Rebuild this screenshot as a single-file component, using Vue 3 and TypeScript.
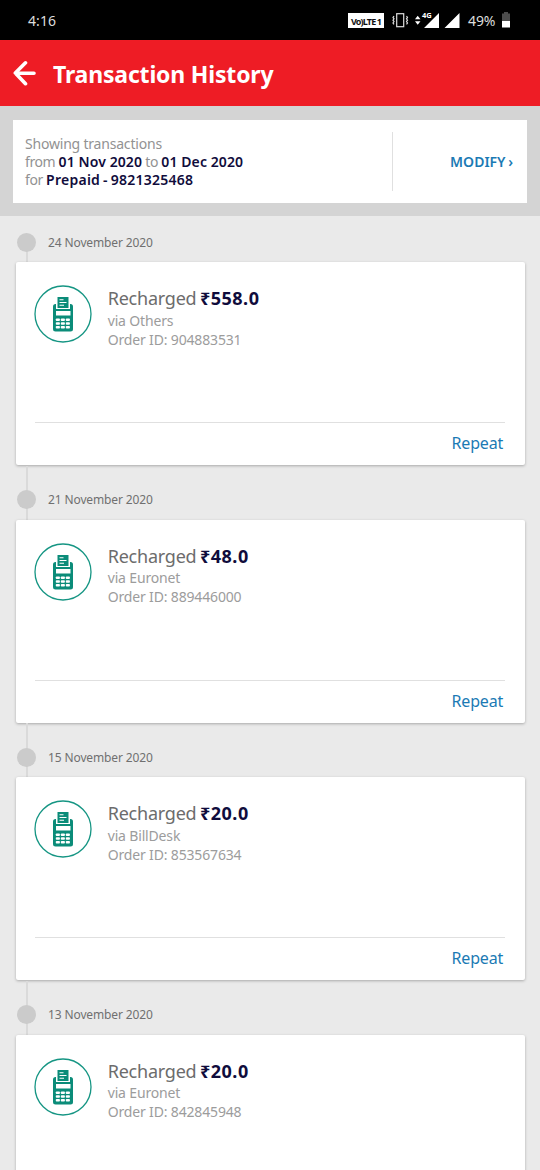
<script setup lang="ts">
interface Transaction {
  date: string
  amount: string
  via: string
  orderId: string
}

const transactions: Transaction[] = [
  { date: '24 November 2020', amount: '558.0', via: 'Others', orderId: '904883531' },
  { date: '21 November 2020', amount: '48.0', via: 'Euronet', orderId: '889446000' },
  { date: '15 November 2020', amount: '20.0', via: 'BillDesk', orderId: '853567634' },
  { date: '13 November 2020', amount: '20.0', via: 'Euronet', orderId: '842845948' },
]
</script>

<template>
  <div class="screen">
    <div class="status">
      <span class="clock">4:16</span>
      <svg class="signals" width="116" height="20" viewBox="0 0 116 20">
        <rect x="0" y="3" width="36" height="15" fill="#fff" />
        <text x="3" y="14.5" class="volte" textLength="31">Vo)LTE 1</text>
        <rect x="48.7" y="3.7" width="7" height="13" fill="none" stroke="#ddd" stroke-width="1.2" />
        <path d="M46 6l-1 1.4 1 1.4-1 1.4 1 1.4-1 1.4 1 1.4M58.5 6l1 1.4-1 1.4 1 1.4-1 1.4 1 1.4-1 1.4" fill="none" stroke="#ddd" stroke-width="1.2" />
        <path d="M67 9.3l2.7-3.5 2.8 3.5zM67 11.2l2.7 3.5 2.8-3.5z" fill="#fff" />
        <path d="M91 3v15H76zM111.5 3v15h-15z" fill="#fff" />
        <path d="M73 0h11.5v7l-2 2.5h-9.5z" fill="#000" />
        <text x="74" y="8" class="net">4G</text>
      </svg>
      <span class="percent">49%</span>
      <svg class="battery" width="10" height="16" viewBox="0 0 10 16">
        <path d="M3 0h4v1.5h2V9H1V1.5h2z" fill="#4d4d4d" />
        <path d="M1 9h8v6.5H1z" fill="#fff" />
      </svg>
    </div>

    <header class="appbar">
      <svg class="back" width="24" height="26" viewBox="0 0 24 26">
        <path d="M13.5 2.8L3.3 13l10.2 10.7M3.5 13.3h18.5" fill="none" stroke="#fff" stroke-width="3.6" stroke-linecap="round" stroke-linejoin="round" />
      </svg>
      <h1>Transaction History</h1>
    </header>

    <section class="filter">
      <div class="filter-card">
        <p class="summary">
          <span class="intro">Showing transactions</span><br />
          <span>from <b>01 Nov 2020</b> to <b>01 Dec 2020</b></span><br />
          <span>for <b class="account">Prepaid - 9821325468</b></span>
        </p>
        <div class="modify"><span>MODIFY ›</span></div>
      </div>
    </section>

    <main class="timeline">
      <article v-for="t in transactions" :key="t.date" class="entry">
        <div class="marker"><i class="dot"></i><time>{{ t.date }}</time></div>
        <div class="card">
          <div class="body">
            <svg class="terminal" width="58" height="58" viewBox="0 0 58 58">
              <circle cx="29" cy="29" r="28" fill="none" stroke="#159583" stroke-width="1.3" />
              <path d="M21.5 19h15a2.500 2.500 0 0 1 2.500 2.500v22.500a2.500 2.500 0 0 1-2.500 2.500h-15a2.500 2.500 0 0 1-2.500-2.500v-22.500a2.500 2.500 0 0 1 2.500-2.500z" fill="#0b8c79" />
              <path d="M22 17h14v7H22z" fill="#fff" />
              <path d="M23.5 12h11v11h-11z" fill="#0b8c79" />
              <path d="M25.5 14.800h4M25.500 17.500h7M25.500 20.200h4.500" stroke="#fff" stroke-width="1.1" />
              <path d="M22 26h14.500v4.500H22z" fill="#fff" />
              <g fill="#fff">
                <template v-for="r in 3" :key="r">
                  <rect v-for="c in 3" :key="c" :x="16.8 + c * 5" :y="29.6 + r * 3.8" width="4.1" height="2.6" rx=".8" />
                </template>
              </g>
            </svg>
            <div class="details">
              <div class="title"><span>Recharged </span><b>₹{{ t.amount }}</b></div>
              <div class="meta">via {{ t.via }}</div>
              <div class="meta">Order ID: {{ t.orderId }}</div>
            </div>
          </div>
          <div class="actions"><span>Repeat</span></div>
        </div>
      </article>
    </main>
  </div>
</template>

<style>
html, body { margin: 0; background: #eaeaea; }
</style>

<style scoped>
.screen {
  width: 540px;
  height: 1170px;
  overflow: hidden;
  background: #eaeaea;
  font-family: "Noto Sans", "Open Sans", sans-serif;
}
.status {
  box-sizing: border-box;
  height: 40px;
  padding: 0 29px 0 28px;
  display: flex;
  align-items: center;
  background: #000;
  color: #ddd;
  font-size: 14px;
}
.clock { flex: 1; letter-spacing: .1px; }
.signals { margin-right: 4px; }
.volte { font: 700 9px "Noto Sans", sans-serif; fill: #111; }
.net { font: 700 7.5px "Noto Sans", sans-serif; fill: #fff; }
.percent { width: 29px; white-space: nowrap; letter-spacing: -.1px; }
.battery { margin-left: 4px; }
.appbar {
  height: 66px;
  padding-left: 12px;
  display: flex;
  align-items: center;
  background: #ee1c25;
  color: #fff;
}
h1 {
  margin: 2px 0 0 17px;
  font-size: 23px;
  line-height: 30px;
  font-weight: 700;
  letter-spacing: -.18px;
}
.filter {
  box-sizing: border-box;
  height: 110px;
  padding: 14px 13px 13px;
  background: #d4d4d4;
}
.filter-card { height: 83px; display: flex; align-items: center; background: #fff; }
.summary {
  box-sizing: border-box;
  width: 379px;
  margin: 0;
  padding-left: 12px;
  color: #929292;
  font-size: 14px;
  line-height: 18px;
  white-space: nowrap;
  letter-spacing: -.4px;
}
.summary b { color: #100c3c; font-weight: 600; letter-spacing: .1px; }
.summary .intro { letter-spacing: -.2px; }
.summary .account { letter-spacing: .25px; word-spacing: -1px; }
.modify {
  flex: 1;
  height: 59px;
  padding-right: 14px;
  display: flex;
  align-items: center;
  justify-content: flex-end;
  border-left: 1px solid #e0e0e0;
  color: #1b7ab4;
  font-size: 14px;
  font-weight: 600;
  word-spacing: -1px;
}
.entry { height: 257.5px; }
.marker {
  position: relative;
  height: 46px;
  padding-left: 17px;
  display: flex;
  align-items: center;
}
.marker::before {
  content: "";
  position: absolute;
  left: 26px;
  top: -8px;
  width: 2px;
  height: 54px;
  background: #dadada;
}
.entry:first-child .marker::before { top: 26px; height: 20px; }
.dot { position: relative; top: 3px; width: 19px; height: 19px; border-radius: 50%; background: #cbcbcb; }
time { margin: 7px 0 0 12px; color: #707070; font-size: 12px; line-height: 18px; letter-spacing: -.12px; }
.card {
  position: relative;
  box-sizing: border-box;
  height: 203.4px;
  margin: 0 15.5px;
  padding: 0 19.5px 0 19.4px;
  background: #fff;
  border-radius: 2px;
  box-shadow: 0 1px 3px rgba(0, 0, 0, .28);
}
.body { box-sizing: border-box; height: 160px; padding-top: 23.2px; display: flex; }
.terminal { flex: none; margin-left: -.9px; }
.details { margin-left: 15.7px; color: #9c9c9c; white-space: nowrap; }
.title { padding-top: 1.2px; color: #6c6c6c; font-size: 18px; line-height: 24.6px; letter-spacing: -.22px; word-spacing: -1px; }
.title b { color: #100c3c; font-weight: 700; letter-spacing: .5px; }
.meta { font-size: 14px; line-height: 19px; letter-spacing: -.16px; }
.actions {
  height: 42px;
  display: flex;
  align-items: center;
  justify-content: flex-end;
  border-top: 1px solid #e0e0e0;
  color: #1b7ab4;
  font-size: 16px;
  letter-spacing: -.2px;
}
.entry:last-child .actions { display: none; }
.actions span { margin: -1.5px 2px 0 0; }
</style>
